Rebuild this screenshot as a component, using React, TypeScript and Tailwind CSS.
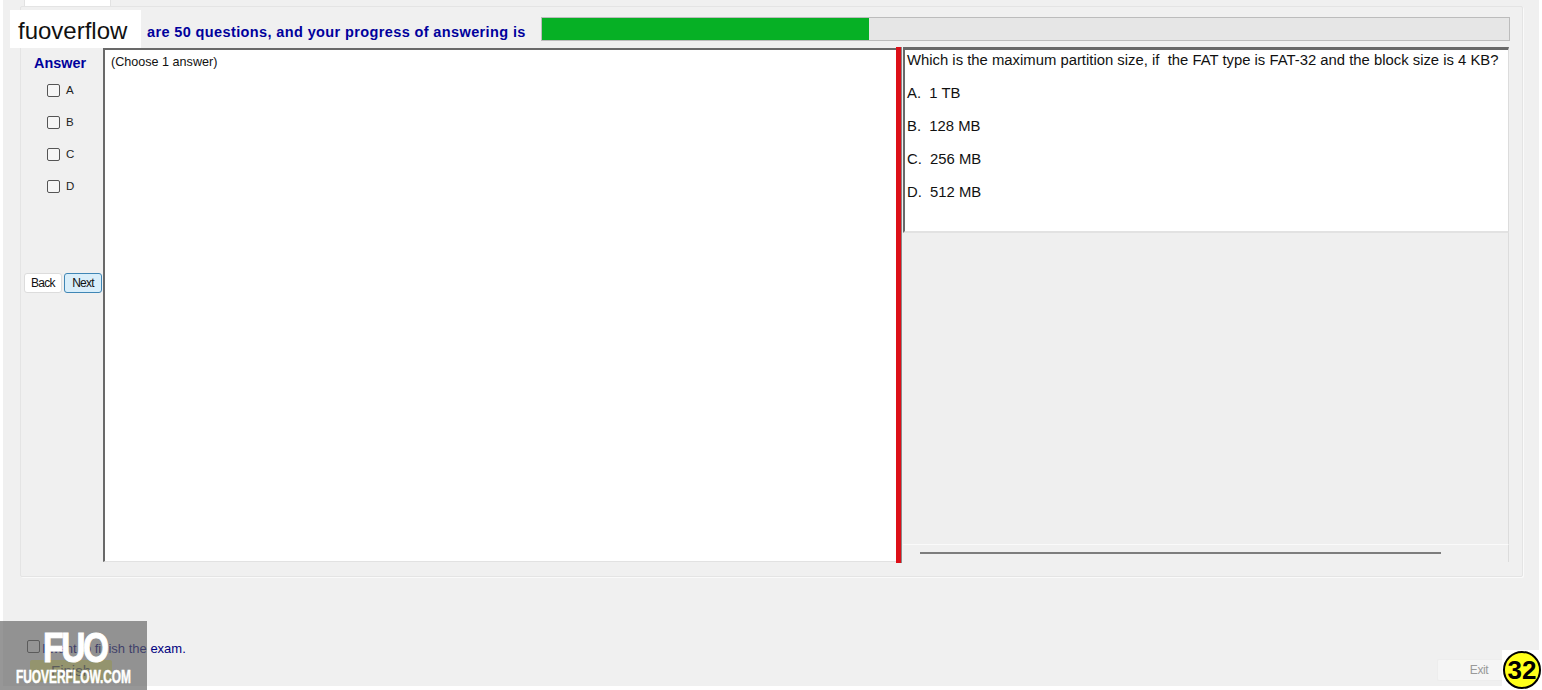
const sans = "font-['Liberation_Sans',Arial,sans-serif]";

function Option({ label }: { label: string }) {
  return (
    <div className="flex h-[32px] items-start gap-[6px] pl-[23px]">
      <span className="mt-[3px] h-[13px] w-[13px] rounded-[2px] border border-[#555] bg-[#f6f6f6]" />
      <span className="mt-[2px] text-[11.5px] leading-[14px] text-[#222]">{label}</span>
    </div>
  );
}

export default function App() {
  return (
    <div className={`relative h-[690px] w-[1542px] overflow-hidden bg-white ${sans}`}>
      <div className="ml-[3px] flex h-[686px] w-[1536px] flex-col bg-[#f0f0f0]">
        <div className="ml-[17px] mt-[6px] h-[571px] w-[1503px] rounded-[2px] border border-[#e4e4e4] bg-[#f0f0f0] pl-[2px] shadow-[1px_1px_0_#fafafa]">
          <div className="flex h-[40px] items-start">
            <p className="ml-[124px] mt-[15px] w-[394px] whitespace-nowrap text-[14.5px] font-bold leading-[20px] tracking-[0.38px] text-[#00009c]">
              are 50 questions, and your progress of answering is
            </p>
            <div className="mt-[10px] h-[24px] w-[969px] border border-[#bcbcbc] bg-[#e6e6e6]">
              <div className="h-full w-[327px] bg-[#06b025]" />
            </div>
          </div>
          <div className="flex h-[516px]">
            <div className="flex w-[80px] flex-col pl-[1px]">
              <div className="h-[34px] pl-[10px] pt-[8px] text-[14.4px] font-bold leading-[17px] text-[#00009c]">Answer</div>
              <Option label="A" />
              <Option label="B" />
              <Option label="C" />
              <Option label="D" />
              <div className="mt-[64px] flex gap-[2px]">
                <button className="h-[20px] w-[38px] rounded-[3px] border border-[#dcdcdc] bg-white text-[12px] leading-[18px] tracking-[-0.7px] text-[#111]">Back</button>
                <button className="h-[20px] w-[38px] rounded-[3px] border border-[#3f86b5] bg-[#d9eefa] text-[12px] leading-[18px] tracking-[-0.8px] text-[#111]">Next</button>
              </div>
            </div>
            <div className="mt-[1px] h-[514px] w-[793px] border-b border-l-2 border-t-2 border-b-[#e2e2e2] border-l-[#696969] border-t-[#696969] bg-white pl-[6px] pt-[3px] text-[12.6px] leading-[18px] text-[#111]">
              (Choose 1 answer)
            </div>
            <div className="h-[516px] w-[6px] border-r border-r-[#8a8a8a] bg-[#dd0f18]" />
            <div className="ml-[1px] flex h-[515px] w-[606px] flex-col">
              <div className="h-[186px] border-b-2 border-l-2 border-r border-t-[3px] border-b-[#e2e2e2] border-l-[#696969] border-r-[#dcdcdc] border-t-[#696969] bg-white pl-[2px] text-[14.85px] text-[#111]">
                <p className="mt-[2px] whitespace-pre leading-[17px]">Which is the maximum partition size, if  the FAT type is FAT-32 and the block size is 4 KB?</p>
                <p className="mt-[16px] whitespace-pre leading-[17px]">A.  1 TB</p>
                <p className="mt-[16px] whitespace-pre leading-[17px]">B.  128 MB</p>
                <p className="mt-[16px] whitespace-pre leading-[17px]">C.  256 MB</p>
                <p className="mt-[16px] whitespace-pre leading-[17px]">D.  512 MB</p>
              </div>
              <div className="flex-1 border-r border-r-[#dcdcdc] bg-[#efefef]" />
              <div className="h-[18px] border-r border-t border-r-[#dcdcdc] border-t-[#fafafa] bg-[#f0f0f0] pl-[17px] pt-[7px]">
                <div className="h-[2px] w-[521px] bg-[#7d7d7d]" />
              </div>
            </div>
          </div>
        </div>
        <div className="relative flex flex-1 items-start">
          <div className="ml-[24px] mt-[63px] flex items-start gap-[1px]">
            <span className="h-[13px] w-[13px] rounded-[2px] border border-[#555] bg-[#f6f6f6]" />
            <span className="ml-[1px] mt-[1px] whitespace-nowrap text-[13px] leading-[16px] text-[#00007f]">I want to finish the exam.</span>
          </div>
          <button className="absolute left-[27px] top-[83px] h-[22px] w-[82px] rounded-[2px] bg-[#f5f58a] text-center text-[15px] leading-[22px] text-[#555]">Finish</button>
          <button className="absolute left-[1434px] top-[82px] h-[22px] w-[68px] rounded-[2px] border border-[#ededed] bg-[#f5f5f5] pl-[16px] text-center text-[12px] tracking-[-0.4px] text-[#9a9a9a]">Exit</button>
        </div>
      </div>

      <div className="absolute left-[24px] top-0 h-[6px] w-[87px] border-x border-[#e2e2e2] bg-white" />

      <div className="absolute left-[10px] top-[10px] flex h-[38px] w-[131px] items-center bg-white pl-[8px] pt-[3px] text-[24px] leading-none text-[#111]">fuoverflow</div>

      <div className="absolute bottom-0 left-0 h-[69px] w-[147px] bg-[#5f5f5f]/65">
        <div className="absolute left-[43px] top-[3px] origin-left scale-x-[0.78] text-[43px] font-bold leading-[46px] tracking-[-3px] text-white [-webkit-text-stroke:1px_white]">FUO</div>
        <div className="absolute left-[16px] top-[46px] origin-left scale-x-[0.68] whitespace-nowrap text-[17.5px] font-bold leading-[20px] text-white [-webkit-text-stroke:0.5px_white]">FUOVERFLOW.COM</div>
      </div>

      <div className="absolute bottom-0 right-0 flex h-[40px] w-[40px] items-center justify-center bg-white">
        <span className="flex h-[38px] w-[38px] items-center justify-center rounded-full border-2 border-black bg-[#ffff1a] text-[26px] font-bold leading-none text-black">32</span>
      </div>
    </div>
  );
}
